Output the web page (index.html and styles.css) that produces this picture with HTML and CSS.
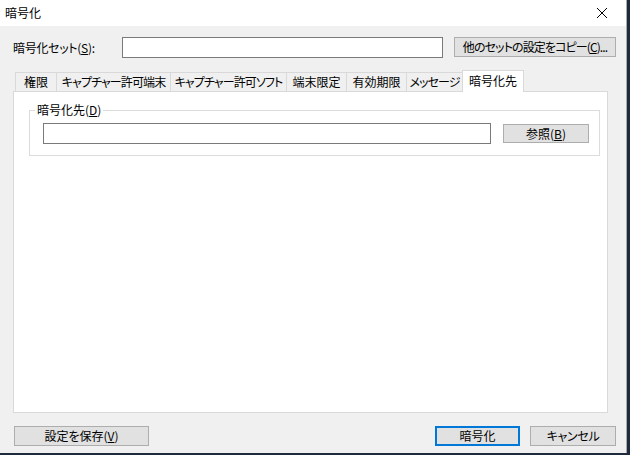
FILE: index.html
```html
<!DOCTYPE html>
<html lang="ja">
<head>
    <meta charset="UTF-8">
    <title>暗号化</title>
    <link rel="stylesheet" href="styles.css">
</head>
<body>
<div class="window">
    <div class="titlebar">
        <span class="title">暗号化</span>
        <span class="close">
            <svg width="12" height="12" viewBox="0 0 12 12">
                <path d="M1 1 L11 11 M11 1 L1 11" stroke="#000" stroke-width="1" fill="none"/>
            </svg>
        </span>
    </div>
    <div class="content">
        <div class="set-row">
            <label class="set-label" for="setName">暗号化セット(<u>S</u>):</label>
            <input type="text" class="text set-input" id="setName">
            <button class="btn copy-btn">他のセットの設定をコピー(<u>C</u>)...</button>
        </div>

        <div class="tabs">
            <div class="tab tab-auth">権限</div>
            <div class="tab tab-cap-pc">キャプチャー許可端末</div>
            <div class="tab tab-cap-soft">キャプチャー許可ソフト</div>
            <div class="tab tab-pc">端末限定</div>
            <div class="tab tab-expire">有効期限</div>
            <div class="tab tab-msg">メッセージ</div>
            <div class="tab active">暗号化先</div>
        </div>

        <div class="panel">
            <div class="group">
                <span class="legend">暗号化先(<u>D</u>)</span>
                <input type="text" class="text dest-input" id="dest">
                <button class="btn browse-btn">参照(<u>B</u>)</button>
            </div>
        </div>

        <div class="footer">
            <button class="btn save-btn">設定を保存(<u>V</u>)</button>
            <div class="spacer"></div>
            <button class="btn ok-btn default">暗号化</button>
            <button class="btn cancel-btn">キャンセル</button>
        </div>
    </div>
</div>
</body>
</html>
```

FILE: styles.css
```css
* {
    box-sizing: border-box;
}

body {
    margin: 0;
    background: #1d2b3c;
    font-family: "Noto Sans CJK JP", "Noto Sans", sans-serif;
    font-size: 12px;
    font-feature-settings: "palt";
    color: #000;
    white-space: nowrap;
}

.window {
    width: 627px;
    height: 453px;
    background: #f0f0f0;
    border-right: 1px solid #aaa;
    display: flex;
    flex-direction: column;
}

.titlebar {
    height: 26px;
    background: #fff;
    display: flex;
    align-items: center;
    padding-left: 5px;
}

.title {
    flex: 1;
    line-height: 16px;
}

.close {
    width: 46px;
    height: 26px;
    display: flex;
    align-items: center;
    justify-content: center;
    margin-right: 1px;
}

.close svg {
    display: block;
}

.content {
    flex: 1;
    padding: 11px 0 0 13px;
}

u {
    text-decoration: underline;
    text-underline-offset: 1px;
}

.set-row {
    display: flex;
    align-items: center;
    height: 21px;
}

.set-label {
    width: 109px;
    line-height: 16px;
    letter-spacing: -0.3px;
}

.text {
    height: 21px;
    border: 1px solid #7a7a7a;
    background: #fff;
    padding: 0 3px;
    font: inherit;
    outline: none;
}

.set-input {
    width: 321px;
}

.btn {
    height: 20px;
    background: #e1e1e1;
    border: 1px solid #adadad;
    font: inherit;
    font-feature-settings: "palt";
    line-height: 16px;
    padding: 0;
    color: #000;
    white-space: nowrap;
    overflow: hidden;
}

.btn.default {
    border: 2px solid #0078d7;
}

.copy-btn {
    width: 162px;
    margin-left: 11px;
    align-self: flex-start;
    letter-spacing: -0.9px;
}

.tabs {
    display: flex;
    align-items: flex-end;
    height: 21px;
    margin: 12px 0 0 2px;
}

.tab {
    height: 19px;
    border: 1px solid #d9d9d9;
    border-bottom: none;
    margin-right: -1px;
    background: #f0f0f0;
    line-height: 17px;
    text-align: center;
    overflow: hidden;
    letter-spacing: -0.9px;
}

.tab-auth { width: 42px; letter-spacing: 0; }
.tab-cap-pc { width: 115px; }
.tab-cap-soft { width: 117px; }
.tab-pc { width: 61px; letter-spacing: 0; }
.tab-expire { width: 61px; letter-spacing: 0; }
.tab-msg { width: 57px; }

.tab.active {
    width: 62px;
    height: 22px;
    margin-bottom: -1px;
    background: #fff;
    position: relative;
    z-index: 1;
    line-height: 19px;
    letter-spacing: 0;
}

.panel {
    width: 595px;
    height: 322px;
    background: #fff;
    border: 1px solid #d9d9d9;
}

.group {
    position: relative;
    display: flex;
    align-items: flex-start;
    height: 46px;
    margin: 18px 7px 0 15px;
    padding: 12px 0 0 13px;
    border: 1px solid #dcdcdc;
}

.legend {
    position: absolute;
    top: -9px;
    left: 5px;
    padding: 0 2px;
    background: #fff;
    line-height: 16px;
}

.dest-input {
    width: 448px;
}

.browse-btn {
    width: 86px;
    height: 19px;
    margin: 1px 0 0 12px;
    line-height: 15px;
}

.footer {
    display: flex;
    margin-top: 13px;
    padding-right: 10px;
}

.spacer {
    flex: 1;
}

.save-btn {
    width: 135px;
    margin-left: 1px;
}

.ok-btn {
    width: 85px;
}

.cancel-btn {
    width: 86px;
    margin-left: 10px;
    letter-spacing: -0.3px;
}
```
